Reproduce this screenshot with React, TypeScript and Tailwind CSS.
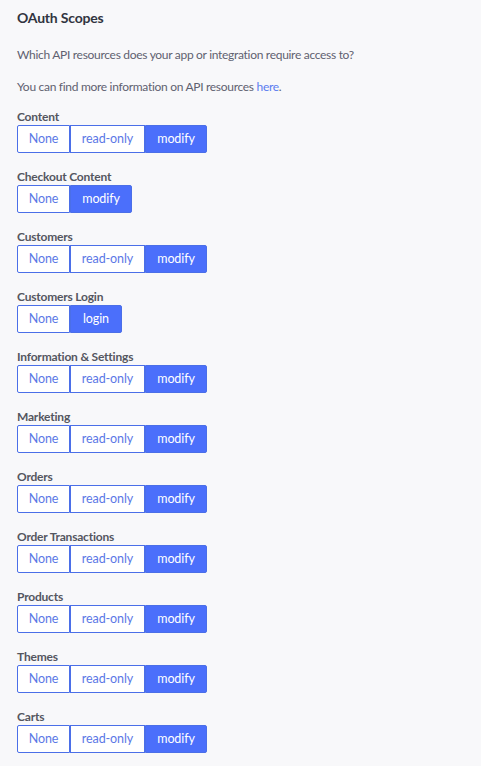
import React, { useState } from 'react';

type Scope = {
  label: string;
  options: string[];
  value: string;
};

const initialScopes: Scope[] = [
  { label: 'Content', options: ['None', 'read-only', 'modify'], value: 'modify' },
  { label: 'Checkout Content', options: ['None', 'modify'], value: 'modify' },
  { label: 'Customers', options: ['None', 'read-only', 'modify'], value: 'modify' },
  { label: 'Customers Login', options: ['None', 'login'], value: 'login' },
  { label: 'Information & Settings', options: ['None', 'read-only', 'modify'], value: 'modify' },
  { label: 'Marketing', options: ['None', 'read-only', 'modify'], value: 'modify' },
  { label: 'Orders', options: ['None', 'read-only', 'modify'], value: 'modify' },
  { label: 'Order Transactions', options: ['None', 'read-only', 'modify'], value: 'modify' },
  { label: 'Products', options: ['None', 'read-only', 'modify'], value: 'modify' },
  { label: 'Themes', options: ['None', 'read-only', 'modify'], value: 'modify' },
  { label: 'Carts', options: ['None', 'read-only', 'modify'], value: 'modify' },
];

// fixed widths per option so the groups line up like the original
const optionWidth: Record<string, string> = {
  None: 'w-[53px]',
  'read-only': 'w-[75px]',
  modify: 'w-[62px]',
  login: 'w-[52px]',
};

function ScopeToggle({ scope, onChange }: { scope: Scope; onChange: (v: string) => void }) {
  return (
    <div className="mb-[16px]">
      <div className="text-[12px] leading-[16px] font-bold tracking-[-0.2px] text-[#54565f]">{scope.label}</div>
      <div className="flex">
        {scope.options.map((opt, i) => {
          const active = opt === scope.value;
          const first = i === 0;
          const last = i === scope.options.length - 1;
          return (
            <button
              key={opt}
              onClick={() => onChange(opt)}
              className={`h-[28px] ${optionWidth[opt]} border border-[#4b6fe8] text-[12.5px] tracking-[-0.1px] ${
                active ? 'bg-[#4b6ffb] text-white' : 'bg-white text-[#5b78e6]'
              } ${first ? 'rounded-l-[2px]' : ''} ${last ? 'rounded-r-[2px]' : ''}`}
            >
              {opt}
            </button>
          );
        })}
      </div>
    </div>
  );
}

export default function App() {
  const [scopes, setScopes] = useState(initialScopes);

  const setValue = (idx: number, value: string) => {
    setScopes(prev => prev.map((s, i) => (i === idx ? { ...s, value } : s)));
  };

  return (
    <div
      className="min-h-[766px] bg-[#f8f8fa] px-[17px] pt-[9px] text-[#5f6170]"
      style={{ fontFamily: 'Lato, "Noto Sans", sans-serif' }}
    >
      <h2 className="text-[14px] leading-[18px] font-bold tracking-[-0.2px] text-[#313440]">OAuth Scopes</h2>
      <p className="mt-[20px] text-[12px] leading-[16px] tracking-[-0.3px]">
        Which API resources does your app or integration require access to?
      </p>
      <p className="mt-[16px] text-[12px] leading-[16px] tracking-[-0.3px]">
        You can find more information on API resources{' '}
        <a href="#" className="text-[#5b7cf0]">here</a>.
      </p>
      <div className="mt-[14px]">
        {scopes.map((s, i) => (
          <ScopeToggle key={s.label} scope={s} onChange={v => setValue(i, v)} />
        ))}
      </div>
    </div>
  );
}
